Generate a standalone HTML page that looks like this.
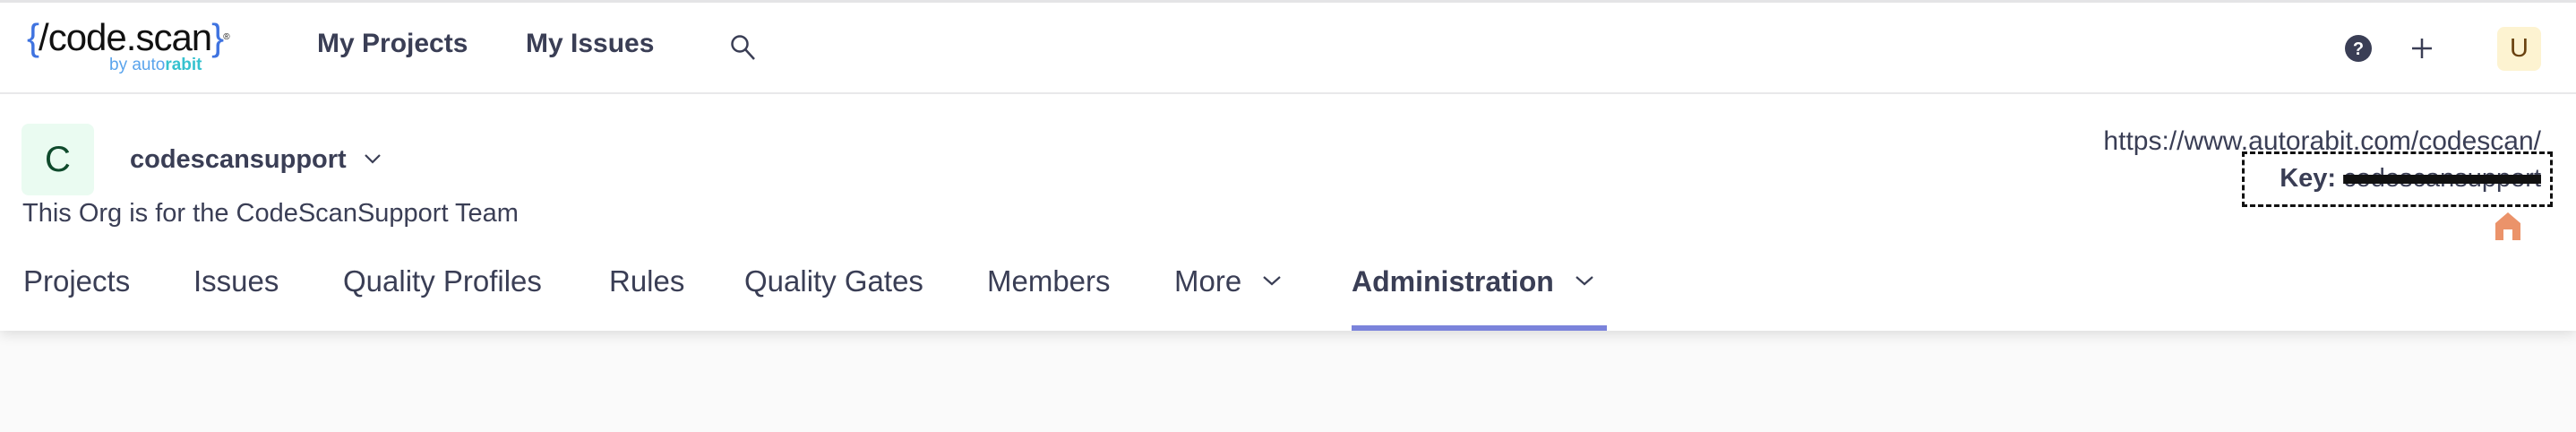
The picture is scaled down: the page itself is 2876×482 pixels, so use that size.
<!DOCTYPE html>
<html><head><meta charset="utf-8"><style>
*{margin:0;padding:0;box-sizing:border-box}
body{width:2876px;height:482px;background:#fafafa;position:relative;overflow:hidden;font-family:"Liberation Sans",sans-serif;color:#3a3e55}
.a{position:absolute;white-space:nowrap}
.t{font-size:33px;line-height:40px;top:294px}
</style></head><body>
<div class="a" style="left:0;top:0;width:2876px;height:369px;background:#fff;box-shadow:0 4px 14px rgba(0,0,0,0.12)"></div>
<div class="a" style="left:0;top:0;width:2876px;height:3px;background:#e4e4e6"></div>
<div class="a" style="left:0;top:103px;width:2876px;height:2px;background:#e8e8ea"></div>
<div class="a" style="left:30px;top:20px;font-size:42px;line-height:44px;letter-spacing:-1px;color:#111"><span style="color:#3f73e0">{</span>/code.scan<span style="color:#3f73e0">}</span><sup style="font-size:10px;vertical-align:top">®</sup></div>
<div class="a" style="left:122px;top:62px;font-size:19px;line-height:22px;color:#5aa4ec">by auto<b style="color:#36c2cf">rabit</b></div>
<div class="a" style="left:354px;top:31px;font-size:30px;font-weight:bold;line-height:36px">My Projects</div>
<div class="a" style="left:587px;top:31px;font-size:30px;font-weight:bold;line-height:36px">My Issues</div>
<svg class="a" style="left:814px;top:37px" width="32" height="32" viewBox="0 0 32 32"><circle cx="12" cy="12" r="8.5" fill="none" stroke="#3a3e55" stroke-width="2.5"/><path d="M18 18L28 29" stroke="#3a3e55" stroke-width="2.5"/></svg>
<svg class="a" style="left:2617px;top:38px" width="32" height="32" viewBox="0 0 32 32"><circle cx="16" cy="16" r="15" fill="#3a3e55"/><text x="16" y="23" text-anchor="middle" font-family="Liberation Sans" font-weight="bold" font-size="20" fill="#fff">?</text></svg>
<svg class="a" style="left:2690px;top:40px" width="28" height="28" viewBox="0 0 28 28"><path d="M14 3V25M3 14H25" stroke="#3a3e55" stroke-width="2.5"/></svg>
<div class="a" style="left:2788px;top:30px;width:49px;height:49px;background:#fdf3d1;border-radius:8px;color:#6a4210;font-size:29px;line-height:49px;text-align:center">U</div>
<div class="a" style="left:24px;top:138px;width:81px;height:80px;background:#eafbf1;border-radius:8px;color:#0f4a2c;font-size:40px;line-height:80px;text-align:center">C</div>
<div class="a" style="left:145px;top:160px;font-size:29px;font-weight:bold;line-height:36px">codescansupport</div>
<svg class="a" style="left:405px;top:170px" width="22" height="14" viewBox="0 0 22 14"><path d="M3 3L11 11L19 3" fill="none" stroke="#3a3e55" stroke-width="2.2"/></svg>
<div class="a" style="left:25px;top:221px;font-size:29px;line-height:34px">This Org is for the CodeScanSupport Team</div>
<div class="a" style="left:2300px;top:141px;font-size:30px;line-height:34px;width:537px;text-align:right">https://www.autorabit.com/codescan/</div>
<div class="a" style="left:2503px;top:169px;width:347px;height:62px;border:3px dashed #111"></div>
<div class="a" style="left:2503px;top:181px;width:334px;text-align:right;font-size:29px;line-height:36px"><b>Key:</b> <span style="text-decoration:line-through;text-decoration-thickness:10px;text-decoration-color:#111">codescansupport</span></div>
<svg class="a" style="left:2785px;top:236px" width="30" height="32" viewBox="0 0 30 32"><path d="M15 1L29 13V32H20V20H10V32H1V13Z" fill="#eb936a"/></svg>
<div class="a t" style="left:26px">Projects</div>
<div class="a t" style="left:216px">Issues</div>
<div class="a t" style="left:383px">Quality Profiles</div>
<div class="a t" style="left:680px">Rules</div>
<div class="a t" style="left:831px">Quality Gates</div>
<div class="a t" style="left:1102px">Members</div>
<div class="a t" style="left:1311px">More</div>
<svg class="a" style="left:1408px;top:306px" width="24" height="14" viewBox="0 0 24 14"><path d="M3 3L12 11L21 3" fill="none" stroke="#3a3e55" stroke-width="2.2"/></svg>
<div class="a t" style="left:1509px;font-weight:bold;font-size:32px">Administration</div>
<svg class="a" style="left:1757px;top:306px" width="24" height="14" viewBox="0 0 24 14"><path d="M3 3L12 11L21 3" fill="none" stroke="#3a3e55" stroke-width="2.2"/></svg>
<div class="a" style="left:1509px;top:363px;width:285px;height:6px;background:#7b83db"></div>
</body></html>
